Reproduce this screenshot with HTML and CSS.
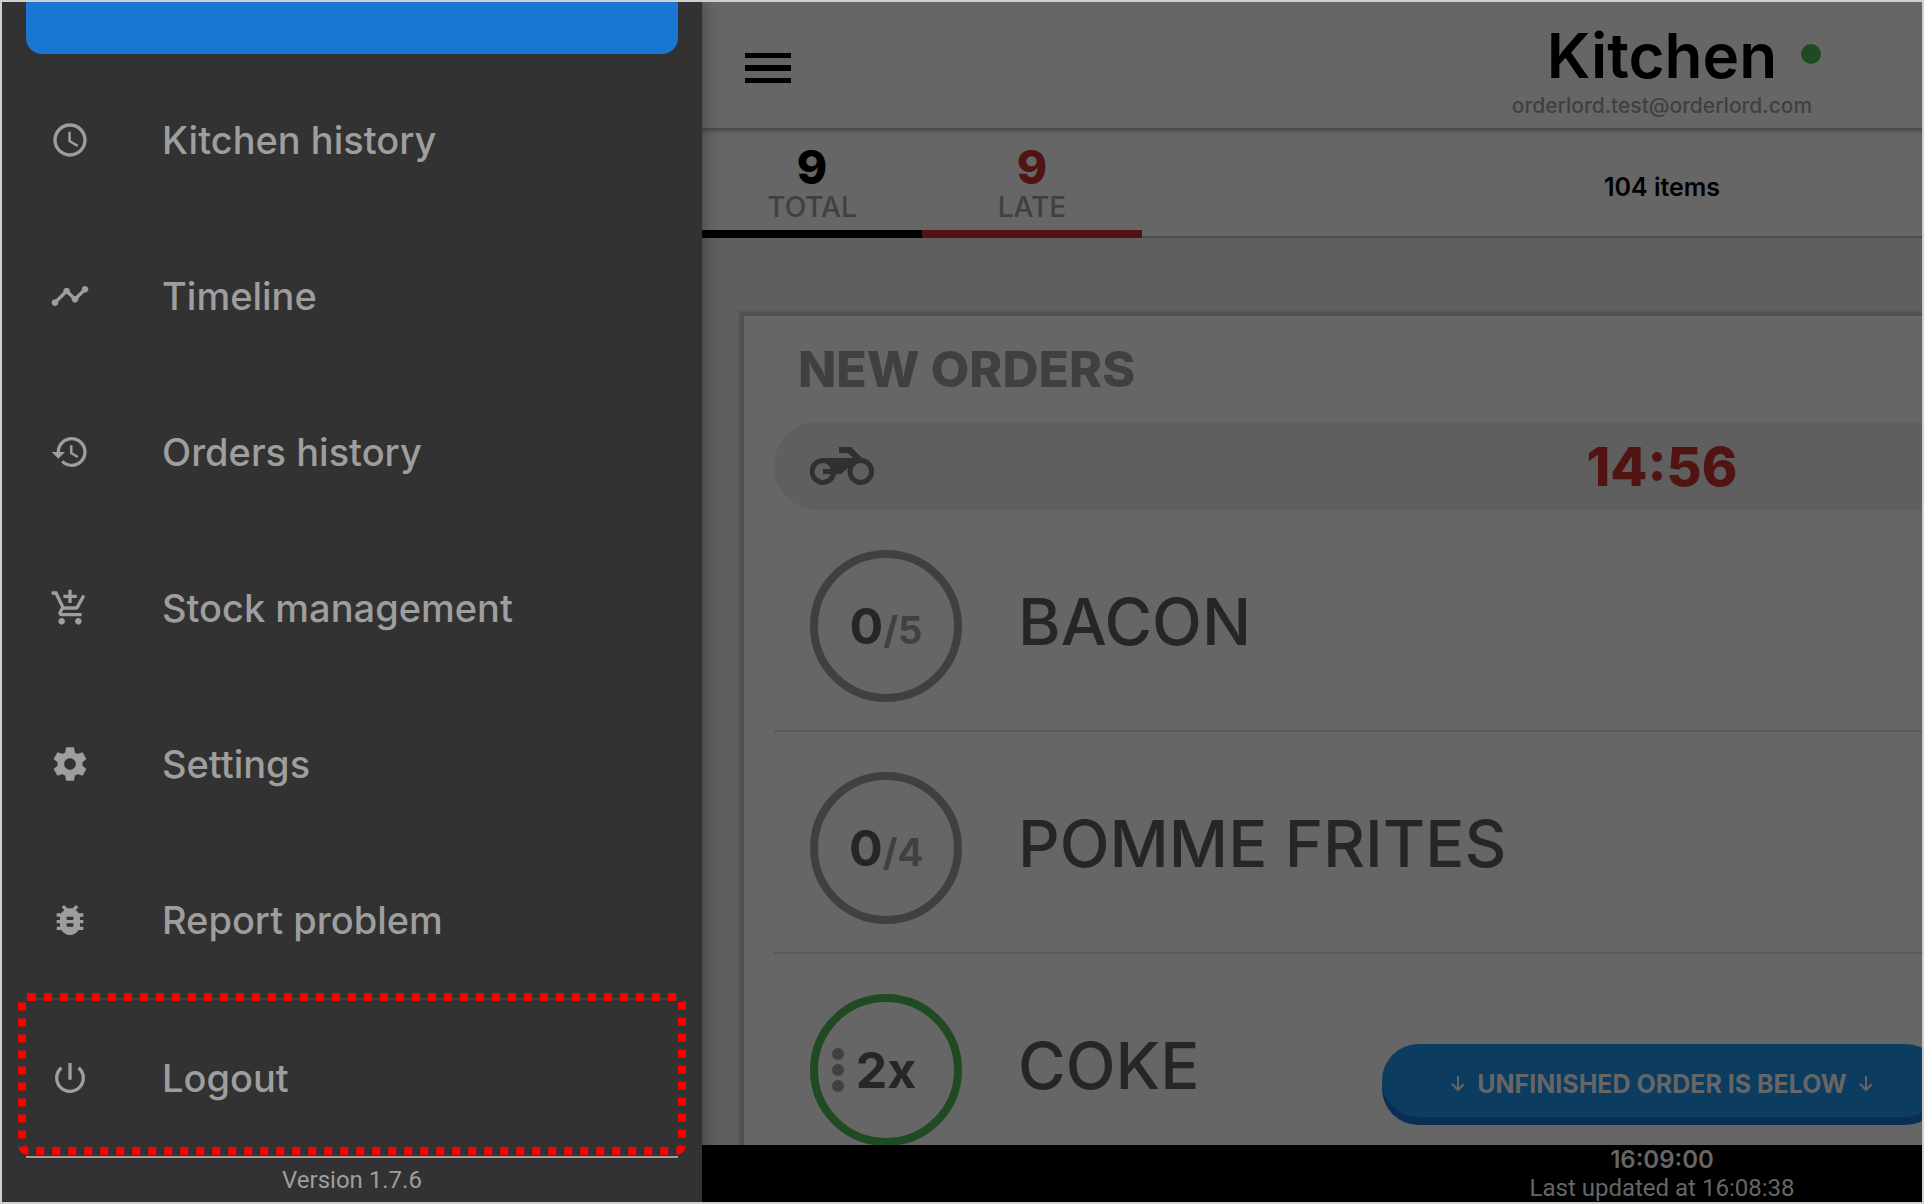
FILE: index.html
```html
<!DOCTYPE html>
<html lang="en">
<head>
<meta charset="utf-8">
<title>Kitchen</title>
<link rel="stylesheet" href="styles.css">
</head>
<body>
<div class="app">
  <aside class="drawer">
    <button class="drawer-action" type="button" aria-label="Current view"></button>
    <nav class="menu">
      <a class="menu-item" href="#kitchen-history">
        <svg class="menu-icon" viewBox="0 0 24 24"><path d="M11.99 2C6.47 2 2 6.48 2 12s4.47 10 9.99 10C17.52 22 22 17.52 22 12S17.52 2 11.99 2zM12 20c-4.42 0-8-3.58-8-8s3.58-8 8-8 8 3.58 8 8-3.58 8-8 8zm.5-13H11v6l5.25 3.15.75-1.23-4.5-2.67z"/></svg>
        <span>Kitchen history</span>
      </a>
      <a class="menu-item" href="#timeline">
        <svg class="menu-icon" viewBox="0 0 24 24"><path d="M23 8c0 1.100-.9 2-2 2-.18 0-.35-.02-.51-.07l-3.560 3.550c.05.16.07.34.07.52 0 1.100-.9 2-2 2s-2-.9-2-2c0-.18.02-.36.07-.52l-2.550-2.550c-.16.05-.34.07-.52.07s-.36-.02-.52-.07l-4.550 4.560c.05.16.07.33.07.51 0 1.100-.9 2-2 2s-2-.9-2-2 .9-2 2-2c.18 0 .35.02.51.07l4.560-4.550C8.020 9.360 8 9.180 8 9c0-1.100.9-2 2-2s2 .9 2 2c0 .18-.02.36-.07.52l2.550 2.550c.16-.05.34-.07.52-.07s.36.02.52.07l3.550-3.560C19.020 8.350 19 8.180 19 8c0-1.100.9-2 2-2s2 .9 2 2z"/></svg>
        <span>Timeline</span>
      </a>
      <a class="menu-item" href="#orders-history">
        <svg class="menu-icon" viewBox="0 0 24 24"><path d="M13 3c-4.970 0-9 4.030-9 9H1l3.890 3.890.07.14L9 12H6c0-3.870 3.130-7 7-7s7 3.130 7 7-3.130 7-7 7c-1.930 0-3.680-.79-4.940-2.060l-1.420 1.420C8.270 19.990 10.510 21 13 21c4.970 0 9-4.030 9-9s-4.030-9-9-9zm-1 5v5l4.280 2.540.72-1.210-3.500-2.080V8H12z"/></svg>
        <span>Orders history</span>
      </a>
      <a class="menu-item" href="#stock">
        <svg class="menu-icon" viewBox="0 0 24 24"><path d="M11 9h2V6h3V4h-3V1h-2v3H8v2h3v3zm-4 9c-1.100 0-1.990.9-1.990 2S5.900 22 7 22s2-.9 2-2-.9-2-2-2zm10 0c-1.100 0-1.990.9-1.990 2s.89 2 1.990 2 2-.9 2-2-.9-2-2-2zm-9.830-3.250l.03-.12.9-1.630h7.450c.75 0 1.410-.41 1.750-1.030l3.860-7.010L19.420 4h-.01l-1.100 2-2.760 5H8.530l-.13-.27L6.160 6l-.95-2-.94-2H1v2h2l3.600 7.590-1.350 2.450c-.16.28-.25.61-.25.96 0 1.100.9 2 2 2h12v-2H7.420c-.13 0-.25-.11-.25-.25z"/></svg>
        <span>Stock management</span>
      </a>
      <a class="menu-item" href="#settings">
        <svg class="menu-icon" viewBox="0 0 24 24"><path d="M19.430 12.980c.04-.32.07-.64.07-.98s-.03-.66-.07-.98l2.110-1.650c.19-.15.24-.42.12-.64l-2-3.460c-.12-.22-.39-.3-.61-.22l-2.490 1c-.52-.4-1.080-.73-1.690-.98l-.38-2.650C14.460 2.180 14.250 2 14 2h-4c-.25 0-.46.18-.49.42l-.38 2.650c-.61.25-1.170.59-1.690.98l-2.490-1c-.23-.09-.49 0-.61.22l-2 3.460c-.13.22-.07.49.12.64l2.110 1.650c-.04.32-.07.65-.07.98s.03.66.07.98l-2.110 1.650c-.19.15-.24.42-.12.64l2 3.460c.12.22.39.3.61.22l2.490-1c.52.4 1.080.73 1.690.98l.38 2.650c.03.24.24.42.49.42h4c.25 0 .46-.18.49-.42l.38-2.650c.61-.25 1.170-.59 1.690-.98l2.490 1c.23.09.49 0 .61-.22l2-3.460c.12-.22.07-.49-.12-.64l-2.110-1.650zM12 15.500c-1.930 0-3.500-1.570-3.500-3.500s1.570-3.500 3.500-3.500 3.500 1.570 3.500 3.500-1.570 3.500-3.500 3.500z"/></svg>
        <span>Settings</span>
      </a>
      <a class="menu-item" href="#report">
        <svg class="menu-icon" viewBox="0 0 24 24"><path d="M20 8h-2.810c-.45-.78-1.070-1.450-1.820-1.960L17 4.410 15.590 3l-2.170 2.170C12.960 5.060 12.490 5 12 5c-.49 0-.96.06-1.410.17L8.410 3 7 4.410l1.620 1.630C7.880 6.550 7.260 7.220 6.810 8H4v2h2.090c-.05.33-.09.66-.09 1v1H4v2h2v1c0 .34.04.67.09 1H4v2h2.810c1.040 1.790 2.970 3 5.190 3s4.150-1.210 5.190-3H20v-2h-2.090c.05-.33.09-.66.09-1v-1h2v-2h-2v-1c0-.34-.04-.67-.09-1H20V8zm-6 8h-4v-2h4v2zm0-4h-4v-2h4v2z"/></svg>
        <span>Report problem</span>
      </a>
      <a class="menu-item menu-item-last" href="#logout">
        <svg class="menu-icon" viewBox="0 0 24 24"><path d="M13 3h-2v10h2V3zm4.830 2.170l-1.420 1.420C17.990 7.860 19 9.810 19 12c0 3.870-3.130 7-7 7s-7-3.130-7-7c0-2.190 1.010-4.140 2.580-5.420L6.170 5.170C4.230 6.820 3 9.260 3 12c0 4.970 4.030 9 9 9s9-4.030 9-9c0-2.740-1.230-5.180-3.170-6.830z"/></svg>
        <span>Logout</span>
        <svg class="marker" viewBox="0 0 668 162"><rect x="4" y="4" width="660" height="154" rx="6"/></svg>
      </a>
    </nav>
    <p class="version">Version 1.7.6</p>
  </aside>

  <main class="board">
    <header class="topbar">
      <button class="menu-button" type="button" aria-label="Menu">
        <svg viewBox="0 0 46 30"><path d="M0 0h46v5H0zM0 12h46v6H0zM0 25h46v5H0z"/></svg>
      </button>
      <div class="heading">
        <h1 class="title">Kitchen<span class="status"></span></h1>
        <p class="account">orderlord.test@orderlord.com</p>
      </div>
    </header>

    <section class="stats">
      <button class="stat" type="button"><b>9</b><span>TOTAL</span></button>
      <button class="stat stat-late" type="button"><b>9</b><span>LATE</span></button>
      <p class="item-count">104 items</p>
    </section>

    <section class="orders">
      <div class="card">
        <h2 class="card-title">NEW ORDERS</h2>
        <div class="order-bar">
          <svg class="bike" viewBox="0 0 64 38"><path fill-rule="evenodd" d="M29 0h12l11 11a13.300 13.500 0 1 1-14 10l-7 6h-5a13.300 13.500 0 1 1-13-16h30l-5-5h-9zM13.300 16a8.300 8.500 0 1 0 7.500 11H13v-5h7.500a8.300 8.500 0 0 0-7.200-6zM50.700 16a8.300 8.500 0 1 0 .1 0z"/></svg>
          <time class="timer">14:56</time>
        </div>
        <ul class="lines">
          <li class="line"><span class="ring"><b>0</b><small>/5</small></span><span class="name">BACON</span></li>
          <li class="line"><span class="ring"><b>0</b><small>/4</small></span><span class="name">POMME FRITES</span></li>
          <li class="line"><span class="ring ring-open"><b>2x</b><svg class="dots" viewBox="0 0 12 44"><circle cx="6" cy="6" r="6"/><circle cx="6" cy="22" r="6"/><circle cx="6" cy="38" r="6"/></svg></span><span class="name">COKE</span></li>
        </ul>
      </div>
      <button class="below" type="button">
        <svg class="arrow" viewBox="0 0 14 16"><path d="M7 0v14M1 8l6 6 6-6"/></svg>
        <span>UNFINISHED ORDER IS BELOW</span>
        <svg class="arrow" viewBox="0 0 14 16"><path d="M7 0v14M1 8l6 6 6-6"/></svg>
      </button>
    </section>

    <footer class="clock">
      <time class="now">16:09:00</time>
      <p class="updated">Last updated at 16:08:38</p>
    </footer>
  </main>
</div>
</body>
</html>
```
FILE: styles.css
```css
* { box-sizing: border-box; }

body, h1, h2, p, ul { margin: 0; padding: 0; }

body {
  font-family: Inter, sans-serif;
  background: #ccc;
}

button {
  border: 0;
  padding: 0;
  background: none;
  font: inherit;
}

.app {
  display: flex;
  height: 100vh;
  overflow: hidden;
  border: 2px solid #cfcfcf;
}

/* Drawer */
.drawer {
  position: relative;
  z-index: 1;
  flex: 0 0 700px;
  display: flex;
  flex-direction: column;
  padding: 0 24px;
  background: #323232;
  color: #9e9e9e;
  box-shadow: 0 0 16px rgba(0, 0, 0, 0.4);
}

.drawer-action {
  flex: none;
  height: 52px;
  margin-bottom: 8px;
  border-radius: 0 0 16px 16px;
  background: #1976d2;
}

.menu {
  flex: 1;
  display: flex;
  flex-direction: column;
}

.menu-item {
  flex: 0 0 156px;
  display: flex;
  align-items: center;
  gap: 72px;
  padding-left: 24px;
  color: inherit;
  font-size: 38px;
  font-weight: 500;
  text-decoration: none;
}

.menu-item-last {
  position: relative;
  flex: 0 0 160px;
  border-top: 2px solid #424242;
  border-bottom: 2px solid #9e9e9e;
}

.menu-icon {
  width: 40px;
  height: 40px;
  fill: currentColor;
}

.marker {
  position: absolute;
  top: -7px;
  left: -8px;
  right: -8px;
  height: 162px;
  fill: none;
  stroke: #f00;
  stroke-width: 8;
  stroke-dasharray: 8 8;
}

.version {
  flex: 0 0 44px;
  font: 24px/44px Roboto, sans-serif;
  text-align: center;
}

/* Board, pushed aside at its full width by the drawer */
.board {
  flex: 0 0 calc(100vw - 4px);
  display: flex;
  flex-direction: column;
  background: #666;
}

.topbar {
  position: relative;
  z-index: 0;
  flex: 0 0 126px;
  display: grid;
  grid-template-columns: 1fr auto 1fr;
  align-items: center;
  box-shadow: 0 2px 4px 1px rgba(0, 0, 0, 0.3);
}

.menu-button {
  justify-self: start;
  margin: 6px 0 0 43px;
}

.menu-button svg {
  display: block;
  width: 46px;
  height: 30px;
}

.heading {
  padding-top: 10px;
  text-align: center;
}

.title {
  position: relative;
  display: inline-block;
  font-size: 62px;
  font-weight: 600;
  line-height: 72px;
}

.status {
  position: absolute;
  top: 24px;
  left: calc(100% + 24px);
  width: 20px;
  height: 20px;
  border-radius: 50%;
  background: #204a23;
}

.account {
  color: #404040;
  font-size: 21px;
  font-weight: 500;
  line-height: 28px;
}

.stats {
  position: relative;
  flex: 0 0 110px;
  display: flex;
}

.stats::after {
  content: "";
  flex: 1;
  border-bottom: 2px solid #4b4b4b;
}

.stat {
  flex: 0 0 220px;
  display: flex;
  flex-direction: column;
  align-items: center;
  padding-top: 16px;
  border-bottom: 8px solid #000;
  color: #000;
}

.stat b {
  font-size: 46px;
  font-weight: 800;
  line-height: 46px;
}

.stat span {
  color: #404040;
  font-size: 28px;
  font-weight: 500;
  line-height: 34px;
}

.stat-late {
  border-color: #521313;
  color: #521313;
}

.item-count {
  position: absolute;
  inset: 0;
  font-size: 25px;
  font-weight: 600;
  line-height: 118px;
  text-align: center;
  pointer-events: none;
}

.orders {
  position: relative;
  flex: 1;
  min-height: 0;
  padding: 78px 42px 0;
  overflow: hidden;
  background: #5f5f5f;
}

.card {
  padding: 0 30px;
  background: #666;
  box-shadow: 0 0 0 2px #4f4f4f, 0 0 0 4px #535353, 0 0 0 6px #585858;
}

.card-title {
  padding: 23px 24px;
  color: #404040;
  font-size: 50px;
  font-weight: 800;
  line-height: 60px;
}

.order-bar {
  display: grid;
  grid-template-columns: 1fr auto 1fr;
  align-items: center;
  height: 88px;
  padding: 0 36px;
  border-radius: 44px;
  background: #5f5f5f;
}

.bike {
  width: 64px;
  height: 38px;
  fill: #303030;
}

.timer {
  color: #521313;
  font-size: 54px;
  font-weight: 800;
}

.lines { list-style: none; }

.line {
  display: flex;
  align-items: flex-start;
  gap: 56px;
  height: 222px;
  padding: 40px 36px 0;
  border-bottom: 2px solid #5a5a5a;
}

.ring {
  position: relative;
  display: flex;
  align-items: center;
  justify-content: center;
  width: 152px;
  height: 152px;
  border: 8px solid #404040;
  border-radius: 50%;
  color: #262626;
  font-size: 50px;
}

.ring b { font-weight: 700; }

.ring small {
  padding-top: 8px;
  color: #404040;
  font-size: 38px;
  font-weight: 700;
}

.ring-open { border-color: #204a23; }

.dots {
  position: absolute;
  left: 14px;
  width: 12px;
  height: 44px;
  fill: #404040;
}

.name {
  color: #262626;
  font-size: 65px;
  font-weight: 500;
  line-height: 144px;
}

.below {
  position: absolute;
  left: 50%;
  bottom: 28px;
  width: 560px;
  height: 73px;
  margin-left: -280px;
  display: flex;
  align-items: center;
  justify-content: center;
  gap: 12px;
  padding-top: 6px;
  border-radius: 37px;
  background: #0d3c61;
  box-shadow: 0 8px 0 #0a2f54;
  color: #666;
  font-size: 25px;
  font-weight: 700;
}

.arrow {
  width: 14px;
  height: 16px;
  fill: none;
  stroke: currentColor;
  stroke-width: 2;
}

.clock {
  flex: 0 0 57px;
  padding-top: 1px;
  background: #000;
  color: #666;
  font-size: 24px;
  line-height: 28px;
  text-align: center;
}

.now {
  display: block;
  font-weight: 600;
}

.updated { font-family: Roboto, sans-serif; }
```
